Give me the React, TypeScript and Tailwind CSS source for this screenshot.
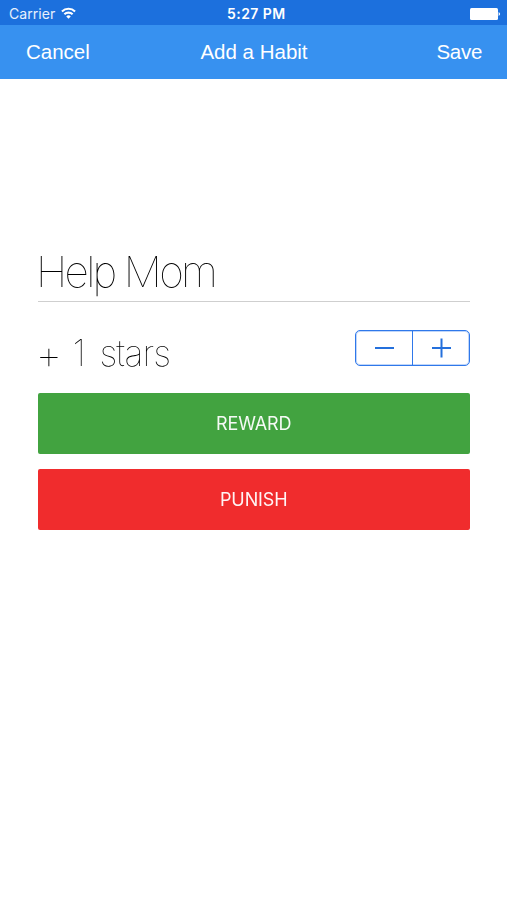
import * as React from "react";

function StatusBar() {
    return (
        <div className="relative flex h-[25px] items-center justify-between bg-[#1c70dd] pl-[9px] pr-[6px] pt-[2px] text-white">
            <div className="flex items-center gap-[6px]">
                <span className="font-[Inter] text-[14px] leading-4 tracking-[0.05px] text-white/90">Carrier</span>
                <svg className="mb-px h-[12px] w-[15px]" viewBox="0 0 16 12" fill="none" stroke="currentColor" strokeWidth="2.2">
                    <path d="M1 4.4a10 10 0 0 1 14 0" />
                    <path d="M3.6 7.4a6.3 6.3 0 0 1 8.8 0" />
                    <path d="M8 12 5.6 9.6a3.4 3.4 0 0 1 4.8 0z" fill="currentColor" stroke="none" />
                </svg>
            </div>
            <span className="absolute left-[227px] whitespace-nowrap font-[Inter] text-[14px] font-semibold leading-4 tracking-[0.45px]">
                5:27 PM
            </span>
            <svg className="h-[12px] w-[31px]" viewBox="0 0 31 12" fill="currentColor">
                <rect width="28" height="12" rx="1.5" />
                <path d="M28.6 4q3 2 0 4z" />
            </svg>
        </div>
    );
}

function NavBar() {
    return (
        <header className="grid h-[54px] grid-cols-3 items-center bg-[#3791f0] pl-[26px] pr-[25px] pt-px font-['Liberation_Sans'] text-[20.5px] text-white">
            <button className="text-left">Cancel</button>
            <h1 className="whitespace-nowrap text-center">Add a Habit</h1>
            <button className="text-right tracking-[-0.3px]">Save</button>
        </header>
    );
}

type StepperProps = {
    onDecrease: () => void;
    onIncrease: () => void;
};

function Stepper({ onDecrease, onIncrease }: StepperProps) {
    return (
        <div className="flex h-[36px] w-[115px] rounded-[5px] border border-[#2f78ea] text-[#2470dc] ring-1 ring-inset ring-[#2f78ea]/30">
            <button
                onClick={onDecrease}
                className="flex flex-1 items-center justify-center border-r border-[#2f78ea]"
                aria-label="Decrease"
            >
                <svg className="h-5 w-[19px]" viewBox="0 0 19 20" stroke="currentColor" strokeWidth="2">
                    <path d="M0 10h19" />
                </svg>
            </button>
            <button onClick={onIncrease} className="flex flex-1 items-center justify-center" aria-label="Increase">
                <svg className="h-5 w-[19px]" viewBox="0 0 19 20" stroke="currentColor" strokeWidth="2">
                    <path d="M0 10h19M9.5 .5v19" />
                </svg>
            </button>
        </div>
    );
}

export default function App() {
    const [stars, setStars] = React.useState(1);

    return (
        <div className="min-h-screen bg-white">
            <StatusBar />
            <NavBar />
            <main className="pl-[37.5px] pr-[37px] pt-[166px] will-change-transform">
                <div className="h-[57px] border-b border-[#cfcfcf] font-[Inter] text-[42.5px] font-thin leading-[54px] tracking-[-2.7px] text-black">
                    <span className="-ml-[1.5px]">Help Mom</span>
                </div>
                <div className="flex h-[91px] items-start justify-between pt-[28px]">
                    <div className="flex font-[Inter] text-[36px] font-thin leading-[46px] text-black">
                        <span className="-ml-[2px] w-[37px] pt-px text-[42px]">+</span>
                        <span className="w-[27px]">{stars}</span>
                        <span className="tracking-[-0.9px]">stars</span>
                    </div>
                    <Stepper
                        onDecrease={() => setStars(Math.max(1, stars - 1))}
                        onIncrease={() => setStars(stars + 1)}
                    />
                </div>
                <button className="block h-[61px] w-full rounded-[2px] bg-[#42a340] font-[Inter] text-[18px] tracking-[-0.1px] text-white/95">
                    REWARD
                </button>
                <button className="mt-[15px] block h-[61px] w-full rounded-[2px] bg-[#f02c2d] font-[Inter] text-[18px] tracking-[-0.1px] text-white/95">
                    PUNISH
                </button>
            </main>
        </div>
    );
}
